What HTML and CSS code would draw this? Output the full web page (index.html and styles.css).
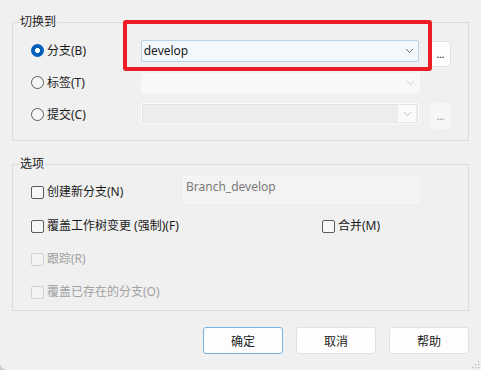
FILE: index.html
```html
<!DOCTYPE html>
<html lang="zh-CN">
<head>
    <meta charset="UTF-8">
    <title>切换/检出</title>
    <link rel="stylesheet" href="styles.css">
</head>
<body>
<div class="dialog">
    <fieldset class="group switch-group">
        <legend>切换到</legend>

        <div class="row row-branch">
            <label class="radio-item"><span class="radio checked"></span>分支(B)</label>
            <div class="combo combo-active">
                <span class="combo-text">develop</span>
                <svg class="chevron" width="9" height="6" viewBox="0 0 9 6"><path d="M1 1l3.5 3.5L8 1" fill="none" stroke="#707070" stroke-width="1"/></svg>
            </div>
            <button class="dots-btn">...</button>
        </div>

        <div class="row row-tag">
            <label class="radio-item"><span class="radio"></span>标签(T)</label>
            <div class="combo combo-disabled">
                <span class="combo-text"></span>
                <svg class="chevron" width="9" height="6" viewBox="0 0 9 6"><path d="M1 1l3.5 3.5L8 1" fill="none" stroke="#cfcfcf" stroke-width="1"/></svg>
            </div>
        </div>

        <div class="row row-commit">
            <label class="radio-item"><span class="radio"></span>提交(C)</label>
            <div class="combo combo-edit">
                <span class="combo-field"></span>
                <span class="combo-drop">
                    <svg class="chevron" width="9" height="6" viewBox="0 0 9 6"><path d="M1 1l3.5 3.5L8 1" fill="none" stroke="#c4c4c4" stroke-width="1"/></svg>
                </span>
            </div>
            <button class="dots-btn dots-disabled">...</button>
        </div>
    </fieldset>

    <fieldset class="group options-group">
        <legend>选项</legend>

        <div class="opt-row opt-first">
            <label class="check-item"><span class="checkbox"></span>创建新分支(N)</label>
            <div class="textbox">Branch_develop</div>
        </div>

        <div class="opt-row opt-split">
            <label class="check-item"><span class="checkbox"></span>覆盖工作树变更 (强制)(F)</label>
            <label class="check-item"><span class="checkbox"></span>合并(M)</label>
        </div>

        <div class="opt-row">
            <label class="check-item disabled"><span class="checkbox"></span>跟踪(R)</label>
        </div>

        <div class="opt-row">
            <label class="check-item disabled"><span class="checkbox"></span>覆盖已存在的分支(O)</label>
        </div>
    </fieldset>

    <div class="actions">
        <button class="btn btn-default">确定</button>
        <button class="btn">取消</button>
        <button class="btn">帮助</button>
    </div>

    <!-- red annotation box over the branch combo -->
    <div class="highlight"></div>

    <svg class="grip" width="9" height="9" viewBox="0 0 9 9">
        <rect x="7" y="1" width="1.2" height="1.2" fill="#b0b0b0"/>
        <rect x="4" y="4" width="1.2" height="1.2" fill="#b0b0b0"/>
        <rect x="7" y="4" width="1.2" height="1.2" fill="#b0b0b0"/>
        <rect x="1" y="7" width="1.2" height="1.2" fill="#b0b0b0"/>
        <rect x="4" y="7" width="1.2" height="1.2" fill="#b0b0b0"/>
        <rect x="7" y="7" width="1.2" height="1.2" fill="#b0b0b0"/>
    </svg>
</div>
</body>
</html>
```

FILE: styles.css
```css
html {
    background: #c9c9c9;
}
body {
    margin: 0;
    font-family: "Noto Sans", "Noto Sans CJK SC", sans-serif;
    font-size: 12px;
    color: #1b1b1b;
}
.dialog {
    position: relative;
    width: 481px;
    height: 370px;
    box-sizing: border-box;
    padding: 15px 12px 0 12px;
    background: #f0f0f0;
    border-bottom-left-radius: 7px;
}
.group {
    margin: 0;
    border: 1px solid #dcdcdc;
    min-width: 0;
}
.group legend {
    line-height: 14px;
    padding: 0 1px;
    margin-left: -12px;
    font-size: 12px;
}
.switch-group {
    padding: 11px 17px 11px 18px;
}
.options-group {
    margin-top: 16px;
    padding: 5px 17px 8px 18px;
}

/* switch rows */
.row {
    display: flex;
    align-items: flex-start;
}
.row-branch {
    height: 27px;
}
.row-tag {
    margin-top: 6px;
    height: 20px;
}
.row-commit {
    margin-top: 10px;
    height: 26px;
}
.radio-item {
    width: 110px;
    display: flex;
    align-items: center;
    gap: 3px;
    height: 21px;
    line-height: 21px;
}
.row-tag .radio-item {
    height: 19px;
}
.row-commit .radio-item {
    margin-top: 1px;
    height: 20px;
}
.radio {
    width: 11px;
    height: 11px;
    border: 1px solid #5c5c5c;
    border-radius: 50%;
    background: #f7f7f7;
    flex: none;
}
.radio.checked {
    width: 13px;
    height: 13px;
    border: none;
    background: radial-gradient(circle, #ffffff 0 2.2px, #005fb8 2.8px);
}
.combo {
    width: 279px;
    box-sizing: border-box;
    display: flex;
    align-items: center;
    position: relative;
}
.combo-active {
    height: 22px;
    background: #f3f8fc;
    border: 1px solid #b9d3e8;
    border-radius: 2px;
    padding: 0 4px 0 2px;
}
.combo-text {
    flex: 1;
    font-size: 12px;
    line-height: 20px;
}
.combo-disabled {
    height: 20px;
    background: #f8f8f8;
    padding: 0 5px 0 2px;
}
.combo-edit {
    height: 21px;
    border: 1px solid #fbfbfb;
    box-shadow: inset 0 0 0 1px #e4e4e4;
    background: #ededed;
    padding: 1px;
}
.combo-field {
    flex: 1;
    align-self: stretch;
}
.combo-drop {
    width: 18px;
    align-self: stretch;
    background: #fafafa;
    display: flex;
    align-items: center;
    justify-content: center;
    margin-right: 1px;
}
.chevron {
    display: block;
    flex: none;
}
.dots-btn {
    margin-left: 11px;
    margin-top: 1px;
    width: 21px;
    height: 26px;
    padding: 0 0 7px 0;
    border: 1px solid #e2e2e2;
    border-radius: 3px;
    background: #fdfdfd;
    font-family: "Noto Sans", sans-serif;
    font-size: 9px;
    line-height: 9px;
    font-weight: bold;
    color: #444;
    display: flex;
    align-items: flex-end;
    justify-content: center;
}
.dots-btn.dots-disabled {
    margin-top: 0;
    border-color: #f6f6f6;
    background: #f6f6f6;
    color: #a5a5a5;
}

/* option rows */
.opt-row {
    display: flex;
    align-items: center;
    height: 20px;
    margin-top: 13px;
}
.opt-row.opt-first {
    margin-top: 0;
    height: 27px;
    align-items: flex-start;
}
.opt-first .check-item {
    width: 152px;
    margin-top: 6px;
}
.opt-split .check-item:first-child {
    width: 291px;
}
.check-item {
    display: flex;
    align-items: center;
    gap: 3px;
    height: 20px;
    line-height: 20px;
}
.checkbox {
    width: 11px;
    height: 11px;
    border: 1px solid #5c5c5c;
    border-radius: 2px;
    background: #f7f7f7;
    flex: none;
}
.check-item.disabled {
    color: #a0a0a0;
}
.check-item.disabled .checkbox {
    border-color: #d4d4d4;
    background: #f3f3f3;
}
.textbox {
    width: 236px;
    height: 27px;
    box-sizing: border-box;
    background: #f3f3f3;
    border: 1px solid #f7f7f7;
    padding: 0 2px;
    line-height: 19px;
    color: #7a7a7a;
}

/* dialog buttons */
.actions {
    display: flex;
    justify-content: flex-end;
    gap: 13px;
    margin-top: 16px;
}
.btn {
    width: 80px;
    height: 27px;
    border: 1px solid #e1e1e1;
    border-radius: 3px;
    background: #fdfdfd;
    font-family: "Noto Sans CJK SC", sans-serif;
    font-size: 12px;
    color: #1b1b1b;
    padding: 0;
}
.btn-default {
    border-color: #79b3e2;
}

.highlight {
    position: absolute;
    left: 123px;
    top: 20px;
    width: 309px;
    height: 51px;
    box-sizing: border-box;
    border: 4px solid #ed1c24;
    border-radius: 3px;
}
.grip {
    position: absolute;
    right: 1px;
    bottom: 1px;
}
```
